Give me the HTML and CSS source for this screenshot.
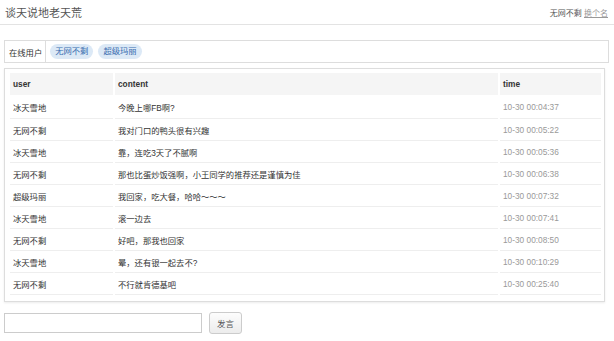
FILE: index.html
```html
<!DOCTYPE html>
<html lang="zh-CN">

<head>
  <meta charset="UTF-8">
  <meta name="viewport" content="width=device-width, initial-scale=1.0">
  <title>谈天说地老天荒</title>
  <link rel="stylesheet" href="styles.css">
</head>

<body>
  <div class="header">
    <h1>谈天说地老天荒</h1>
    <div class="me">无网不剩 <a href="#">换个名</a></div>
  </div>

  <div class="online">
    <div class="online-label">在线用户</div>
    <div class="online-list">
      <span class="tag">无网不剩</span>
      <span class="tag">超级玛丽</span>
    </div>
  </div>

  <div class="messages">
    <table>
      <thead>
        <tr>
          <th class="col-user">user</th>
          <th class="col-content">content</th>
          <th class="col-time">time</th>
        </tr>
      </thead>
      <tbody>
        <tr><td>冰天雪地</td><td>今晚上哪FB啊?</td><td class="time">10-30 00:04:37</td></tr>
        <tr><td>无网不剩</td><td>我对门口的鸭头很有兴趣</td><td class="time">10-30 00:05:22</td></tr>
        <tr><td>冰天雪地</td><td>靠，连吃3天了不腻啊</td><td class="time">10-30 00:05:36</td></tr>
        <tr><td>无网不剩</td><td>那也比蛋炒饭强啊，小王同学的推荐还是谨慎为佳</td><td class="time">10-30 00:06:38</td></tr>
        <tr><td>超级玛丽</td><td>我回家，吃大餐，哈哈～～～</td><td class="time">10-30 00:07:32</td></tr>
        <tr><td>冰天雪地</td><td>滚一边去</td><td class="time">10-30 00:07:41</td></tr>
        <tr><td>无网不剩</td><td>好吧，那我也回家</td><td class="time">10-30 00:08:50</td></tr>
        <tr><td>冰天雪地</td><td>晕，还有银一起去不?</td><td class="time">10-30 00:10:29</td></tr>
        <tr><td>无网不剩</td><td>不行就肯德基吧</td><td class="time">10-30 00:25:40</td></tr>
      </tbody>
    </table>
  </div>

  <form class="say">
    <input type="text" class="say-input">
    <button type="submit" class="say-button">发言</button>
  </form>
</body>

</html>
```

FILE: styles.css
```css
body {
  font-family: "Liberation Sans", "Noto Sans CJK SC", sans-serif;
  font-size: 8.3px;
  color: #333;
  background: #fff;
  margin: 0;
}

.header {
  display: flex;
  justify-content: space-between;
  align-items: center;
  height: 24px;
  padding: 0 6px 0 5px;
  border-bottom: 1px solid #e3e3e3;
}

h1 {
  margin: 0;
  font-size: 11px;
  font-weight: normal;
  color: #555;
}

.me {
  font-size: 8px;
  color: #555;
}

.me a {
  color: #999;
}

.online {
  display: flex;
  align-items: stretch;
  height: 21px;
  margin: 15px 5px 0 4px;
  border: 1px solid #ddd;
}

.online-label {
  display: flex;
  align-items: center;
  padding: 0 3px 0 4px;
  border-right: 1px solid #ddd;
}

.online-list {
  display: flex;
  align-items: center;
  gap: 5px;
  padding-left: 4px;
}

.tag {
  display: inline-block;
  padding: 0 5px;
  height: 15px;
  line-height: 15px;
  border-radius: 8px;
  background: #dce9f6;
  color: #3a6db0;
}

.messages {
  margin: 5px 9px 0 4px;
  padding: 4px 3px 6px 5px;
  border: 1px solid #ddd;
  box-shadow: 0 1px 2px rgba(0, 0, 0, 0.08);
}

table {
  border-collapse: separate;
  border-spacing: 2px 0;
  margin: 0 -2px;
  width: calc(100% + 4px);
}

th {
  height: 22px;
  padding: 0 3px;
  text-align: left;
  background: #f5f5f5;
  font-weight: bold;
  color: #333;
}

th.col-user {
  width: 97px;
}

th.col-time {
  width: 95px;
}

tbody tr:first-child td {
  height: 23px;
}

td {
  height: 21px;
  padding: 0 3px;
  border-bottom: 1px solid #eee;
}

td.time {
  color: #999;
}

.say {
  display: flex;
  align-items: center;
  gap: 7px;
  margin: 10px 0 0 4px;
}

.say-input {
  width: 198px;
  height: 20px;
  box-sizing: border-box;
  border: 1px solid #ccc;
  padding: 0 4px;
  margin: 0;
}

.say-button {
  height: 22px;
  padding: 0 7px;
  font-family: inherit;
  font-size: 8.5px;
  color: #555;
  background: linear-gradient(#fdfdfd, #ececec);
  border: 1px solid #ccc;
  border-radius: 3px;
}
```
